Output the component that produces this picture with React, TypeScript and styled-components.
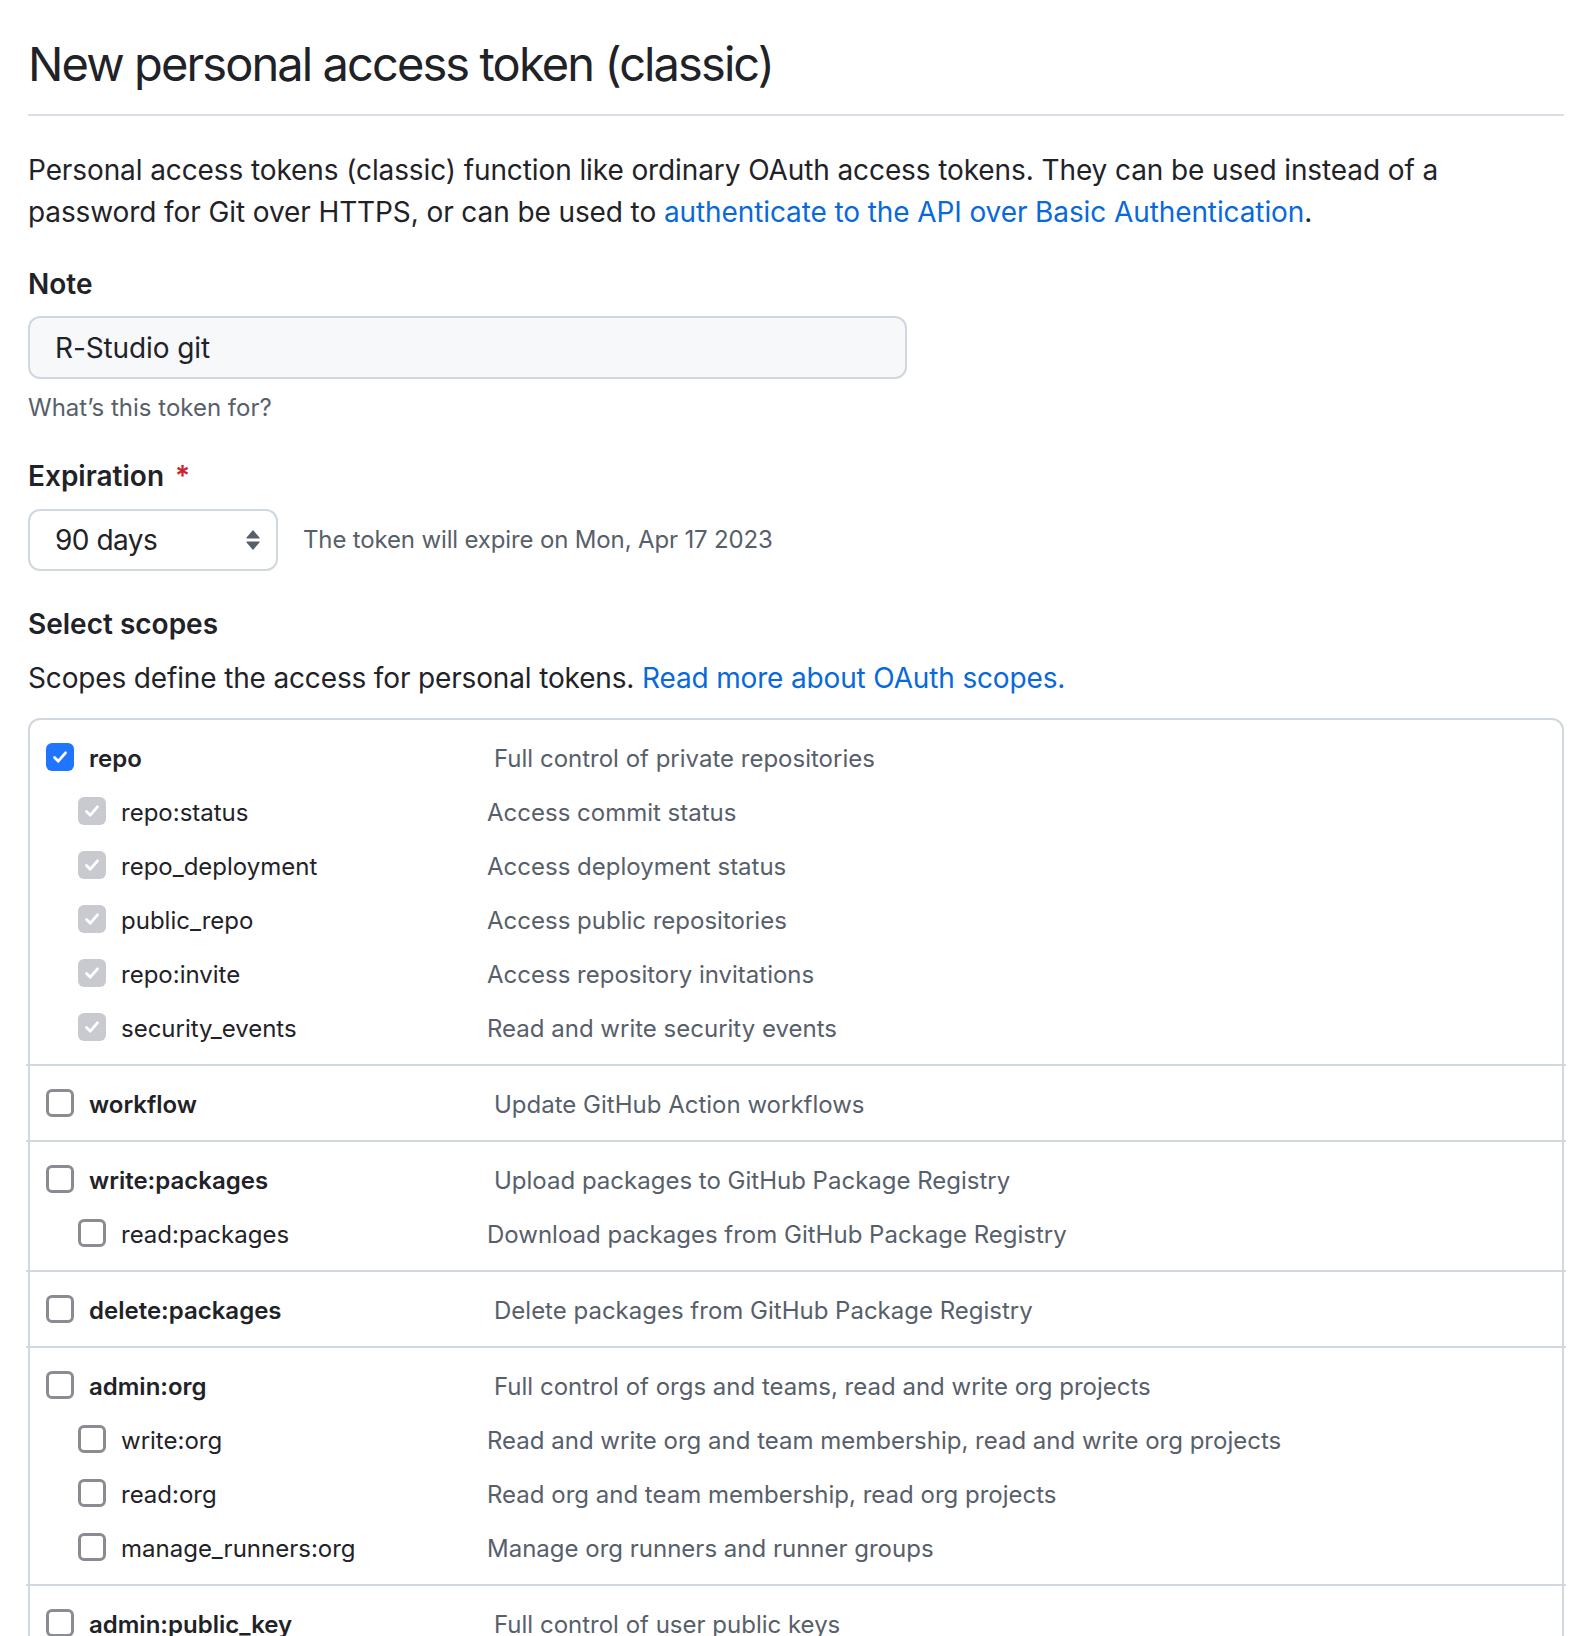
import React from "react";
import styled, { createGlobalStyle } from "styled-components";

const GlobalStyle = createGlobalStyle`
  html, body { margin: 0; padding: 0; background: #ffffff; }
  body {
    font-family: Inter, "Noto Sans", "Liberation Sans", sans-serif;
    color: #1f2328;
    -webkit-font-smoothing: antialiased;
  }
  * { box-sizing: border-box; }
`;

const Page = styled.main`
  width: 1586px;
  padding: 34px 22px 60px 28px;
`;

const Subhead = styled.div`
  padding-bottom: 20px;
  border-bottom: 2px solid #d8dee4;
`;

const Title = styled.h2`
  margin: 0;
  font-size: 47px;
  font-weight: 400;
  line-height: 60px;
  letter-spacing: -1.9px;
`;

const Intro = styled.p`
  margin: 33px 0 0;
  max-width: 1470px;
  font-size: 28px;
  line-height: 42px;
  letter-spacing: -0.1px;
`;

const Link = styled.a`
  color: #0969da;
  text-decoration: none;
`;

const FieldLabel = styled.div<{ $gap?: number }>`
  margin-top: ${(p) => p.$gap ?? 29}px;
  font-size: 28px;
  font-weight: 600;
  line-height: 42px;
`;

const Required = styled.span`
  color: #cf222e;
  margin-left: 11px;
`;

const TextInput = styled.input`
  display: block;
  margin-top: 11px;
  width: 879px;
  height: 63px;
  padding: 0 25px;
  border: 2px solid #d0d7de;
  border-radius: 12px;
  background: #f6f8fa;
  font-family: inherit;
  font-size: 28px;
  letter-spacing: -0.1px;
  color: #1f2328;
  outline: none;
`;

const Hint = styled.div`
  margin-top: 11px;
  font-size: 24px;
  line-height: 36px;
  color: #57606a;
`;

const ExpirationRow = styled.div`
  margin-top: 12px;
  display: flex;
  align-items: center;
  gap: 25px;
`;

const SelectBox = styled.div`
  width: 250px;
  height: 62px;
  display: flex;
  align-items: center;
  justify-content: space-between;
  padding: 0 15px 0 25px;
  border: 2px solid #d0d7de;
  border-radius: 12px;
  background: #ffffff;
  font-size: 28px;
  letter-spacing: -0.5px;
  color: #1f2328;
`;

const ExpireNote = styled.span`
  font-size: 24px;
  line-height: 36px;
  letter-spacing: -0.15px;
  color: #57606a;
`;

const Lead = styled.p`
  margin: 12px 0 0;
  font-size: 28px;
  line-height: 42px;
  letter-spacing: -0.15px;
`;

const ScopeBox = styled.div`
  margin-top: 19px;
  border: 2px solid #d0d7de;
  border-radius: 12px;
`;

const Group = styled.div`
  padding: 10px 0;
`;

const Divider = styled.hr`
  margin: 0 -4px;
  border: 0;
  height: 2px;
  background: #d0d7de;
`;

const ScopeRow = styled.div<{ $sub?: boolean }>`
  display: grid;
  grid-template-columns: ${(p) => (p.$sub ? "409px" : "448px")} 1fr;
  align-items: center;
  height: 54px;
  padding-left: ${(p) => (p.$sub ? 48 : 16)}px;
  font-size: 24px;
`;

const ScopeLabel = styled.label<{ $bold?: boolean }>`
  display: flex;
  align-items: center;
  gap: 15px;
  font-weight: ${(p) => (p.$bold ? 600 : 400)};
  color: #1f2328;
`;

const ScopeName = styled.span`
  padding-top: 3px;
`;

const ScopeDesc = styled.span`
  padding-top: 3px;
  color: #57606a;
`;

type BoxState = "checked" | "disabled" | "empty";

const CheckBox = styled.span<{ $state: BoxState }>`
  flex: none;
  width: 28px;
  height: 28px;
  border-radius: 6px;
  display: flex;
  align-items: center;
  justify-content: center;
  background: ${(p) =>
    p.$state === "checked" ? "#1f75fe" : p.$state === "disabled" ? "#c9cacf" : "#ffffff"};
  border: ${(p) => (p.$state === "empty" ? "3px solid #8b8b94" : "none")};
`;

function Check({ state }: { state: BoxState }) {
  return (
    <CheckBox $state={state}>
      {state !== "empty" && (
        <svg width="18" height="18" viewBox="0 0 18 18" fill="none" aria-hidden="true">
          <path
            d="M3.5 9.5 L7.3 13.2 L14.5 4.8"
            stroke="#ffffff"
            strokeWidth="2.8"
            strokeLinecap="round"
            strokeLinejoin="round"
          />
        </svg>
      )}
    </CheckBox>
  );
}

type Sub = [string, string];
type ScopeGroup = { name: string; desc: string; checked?: boolean; children?: Sub[] };

const groups: ScopeGroup[] = [
  {
    name: "repo",
    desc: "Full control of private repositories",
    checked: true,
    children: [
      ["repo:status", "Access commit status"],
      ["repo_deployment", "Access deployment status"],
      ["public_repo", "Access public repositories"],
      ["repo:invite", "Access repository invitations"],
      ["security_events", "Read and write security events"],
    ],
  },
  { name: "workflow", desc: "Update GitHub Action workflows" },
  {
    name: "write:packages",
    desc: "Upload packages to GitHub Package Registry",
    children: [["read:packages", "Download packages from GitHub Package Registry"]],
  },
  { name: "delete:packages", desc: "Delete packages from GitHub Package Registry" },
  {
    name: "admin:org",
    desc: "Full control of orgs and teams, read and write org projects",
    children: [
      ["write:org", "Read and write org and team membership, read and write org projects"],
      ["read:org", "Read org and team membership, read org projects"],
      ["manage_runners:org", "Manage org runners and runner groups"],
    ],
  },
  {
    name: "admin:public_key",
    desc: "Full control of user public keys",
    children: [
      ["write:public_key", "Write user public keys"],
      ["read:public_key", "Read user public keys"],
    ],
  },
];

export default function App() {
  return (
    <>
      <GlobalStyle />
      <Page>
        <Subhead>
          <Title>New personal access token (classic)</Title>
        </Subhead>
        <Intro>
          Personal access tokens (classic) function like ordinary OAuth access tokens. They can be used instead of a
          password for Git over HTTPS, or can be used to{" "}
          <Link href="#">authenticate to the API over Basic Authentication</Link>.
        </Intro>

        <FieldLabel $gap={30}>Note</FieldLabel>
        <TextInput readOnly value="R-Studio git" aria-label="Note" />
        <Hint>What’s this token for?</Hint>

        <FieldLabel>
          Expiration
          <Required>*</Required>
        </FieldLabel>
        <ExpirationRow>
          <SelectBox role="combobox">
            <span>90 days</span>
            <svg width="16" height="22" viewBox="0 0 16 22" aria-hidden="true">
              <path d="M2 9 L8 2 L14 9 Z" fill="#57606a" stroke="#57606a" strokeWidth="1.2" strokeLinejoin="round" />
              <path d="M2 13 L8 20 L14 13 Z" fill="#57606a" stroke="#57606a" strokeWidth="1.2" strokeLinejoin="round" />
            </svg>
          </SelectBox>
          <ExpireNote>The token will expire on Mon, Apr 17 2023</ExpireNote>
        </ExpirationRow>

        <FieldLabel $gap={32}>Select scopes</FieldLabel>
        <Lead>
          Scopes define the access for personal tokens. <Link href="#">Read more about OAuth scopes.</Link>
        </Lead>

        <ScopeBox>
          {groups.map((g, gi) => (
            <React.Fragment key={g.name}>
              {gi > 0 && <Divider />}
              <Group>
                <ScopeRow>
                  <ScopeLabel $bold>
                    <Check state={g.checked ? "checked" : "empty"} />
                    <ScopeName>{g.name}</ScopeName>
                  </ScopeLabel>
                  <ScopeDesc>{g.desc}</ScopeDesc>
                </ScopeRow>
                {g.children?.map(([n, d]) => (
                  <ScopeRow $sub key={n}>
                    <ScopeLabel>
                      <Check state={g.checked ? "disabled" : "empty"} />
                      <ScopeName>{n}</ScopeName>
                    </ScopeLabel>
                    <ScopeDesc>{d}</ScopeDesc>
                  </ScopeRow>
                ))}
              </Group>
            </React.Fragment>
          ))}
        </ScopeBox>
      </Page>
    </>
  );
}
